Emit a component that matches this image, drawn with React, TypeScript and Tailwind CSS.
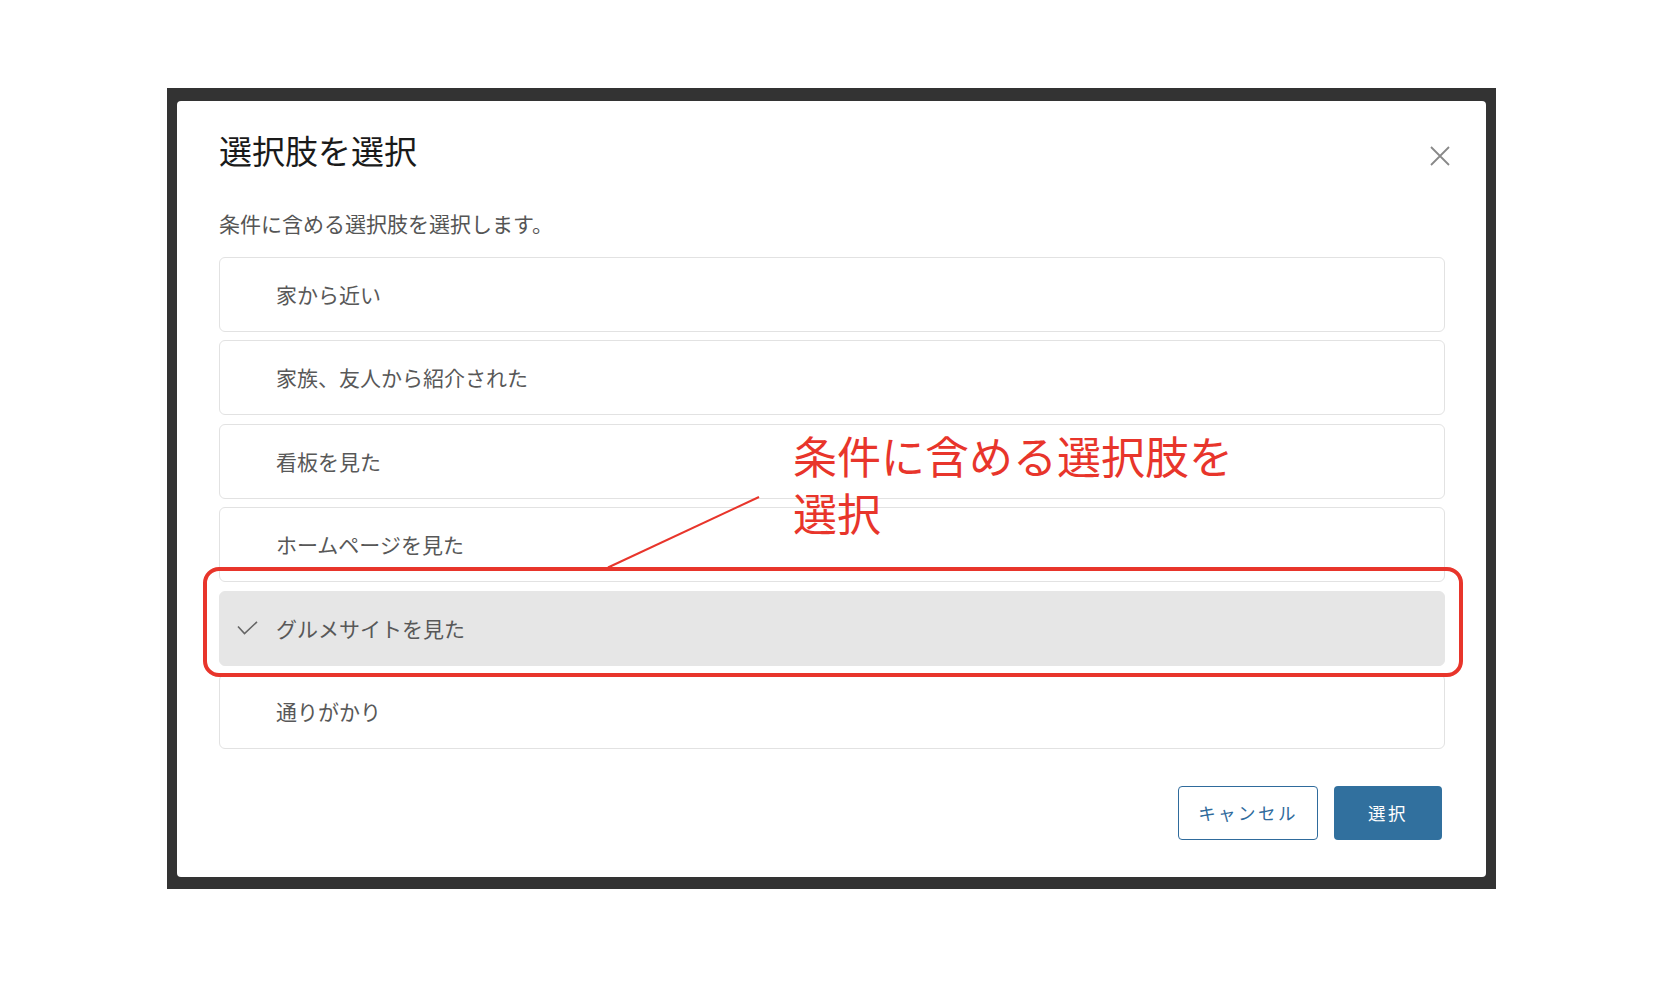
import { useState } from "react";

const options = [
    "家から近い",
    "家族、友人から紹介された",
    "看板を見た",
    "ホームページを見た",
    "グルメサイトを見た",
    "通りがかり",
];

function CheckIcon() {
    return (
        <svg width="21" height="14" viewBox="0 0 21 14" fill="none" className="shrink-0">
            <path d="M1 5.5L7.5 12.5L20 0.8" stroke="#666" strokeWidth="1.6" />
        </svg>
    );
}

function CloseIcon() {
    return (
        <svg width="20" height="20" viewBox="0 0 20 20" fill="none">
            <path d="M1 1L19 19M19 1L1 19" stroke="#888" strokeWidth="1.8" />
        </svg>
    );
}

export default function App() {
    // 選択中の項目（初期状態はグルメサイト）
    const [selected, setSelected] = useState(4);

    return (
        <div
            className="w-[1654px] h-[994px] bg-white pt-[88px] pl-[167px]"
            style={{ fontFamily: '"Noto Sans CJK JP", "Noto Sans", sans-serif' }}
        >
            <div className="w-[1329px] h-[801px] bg-[#333333] pt-[13px] pl-[10px]">
                <div className="relative w-[1309px] h-[776px] bg-white rounded-[4px] pt-[33px] pl-[42px] pr-[41px]">
                    {/* ヘッダー */}
                    <div className="flex justify-between items-start">
                        <h2 className="text-[33px] leading-none text-[#1a1a1a] font-normal">選択肢を選択</h2>
                        <button type="button" className="mt-[12px] -mr-[5px]">
                            <CloseIcon />
                        </button>
                    </div>

                    <p className="mt-[46px] text-[21px] leading-none text-[#555]">
                        条件に含める選択肢を選択します。
                    </p>

                    {/* 選択肢リスト */}
                    <ul className="mt-[23px] flex flex-col gap-[8.4px]">
                        {options.map((label, i) => {
                            const isSelected = i === selected;
                            return (
                                <li key={label} className="flex">
                                    <button
                                        type="button"
                                        onClick={() => setSelected(i)}
                                        className={
                                            isSelected
                                                ? "w-full h-[75px] flex items-center rounded-[6px] bg-[#e6e6e6] border border-[#e6e6e6] text-left"
                                                : "w-full h-[75px] flex items-center rounded-[6px] bg-white border border-[#e2e2e2] text-left"
                                        }
                                    >
                                        <span className="w-[56px] pl-[17px] flex items-center">
                                            {isSelected && <CheckIcon />}
                                        </span>
                                        <span className="text-[21px] leading-none text-[#585858]">{label}</span>
                                    </button>
                                </li>
                            );
                        })}
                    </ul>

                    {/* フッター */}
                    <div className="mt-[37px] flex justify-end gap-[16px] pr-[3px]">
                        <button
                            type="button"
                            className="w-[140px] h-[54px] rounded-[4px] border border-[#2f6b9c] bg-white text-[17.5px] tracking-[0.14em] text-[#2f6b9c]"
                        >
                            キャンセル
                        </button>
                        <button
                            type="button"
                            className="w-[108px] h-[54px] rounded-[4px] bg-[#31709e] text-[17.5px] tracking-[0.14em] text-white"
                        >
                            選択
                        </button>
                    </div>

                    {/* 注釈 */}
                    <div className="absolute left-[25.5px] top-[466px] w-[1260px] h-[110px] rounded-[16px] border-[4px] border-[#e8352b] pointer-events-none" />
                    <svg
                        className="absolute left-0 top-0 pointer-events-none"
                        width="1309"
                        height="776"
                        viewBox="0 0 1309 776"
                    >
                        <line x1="582" y1="396" x2="431" y2="466.5" stroke="#e8352b" strokeWidth="2" />
                    </svg>
                    <div className="absolute left-[616px] top-[326px] text-[44px] leading-[57px] text-[#e8352b] pointer-events-none">
                        条件に含める選択肢を
                        <br />
                        選択
                    </div>
                </div>
            </div>
        </div>
    );
}
